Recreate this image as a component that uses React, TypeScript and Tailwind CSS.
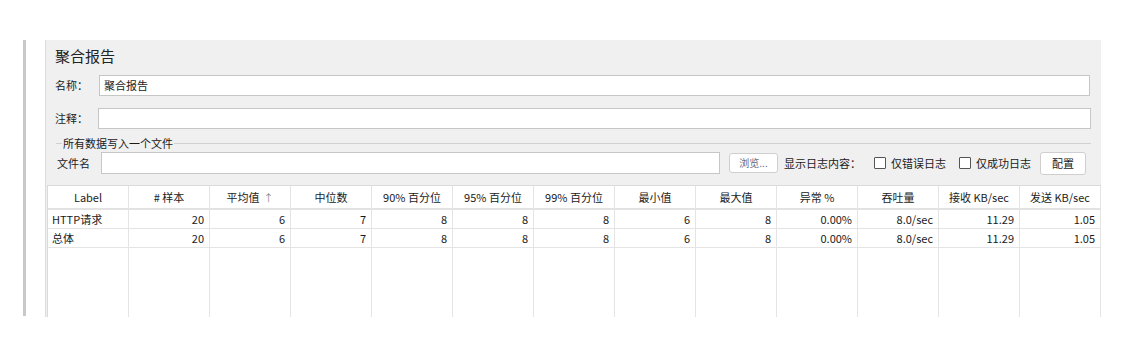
import type { FC } from 'react';

const cols = [
  { h: 'Label', r: ['HTTP请求', '总体'] },
  { h: '# 样本', r: ['20', '20'] },
  { h: '平均值', r: ['6', '6'], sort: true },
  { h: '中位数', r: ['7', '7'] },
  { h: '90% 百分位', r: ['8', '8'] },
  { h: '95% 百分位', r: ['8', '8'] },
  { h: '99% 百分位', r: ['8', '8'] },
  { h: '最小值', r: ['6', '6'] },
  { h: '最大值', r: ['8', '8'] },
  { h: '异常 %', r: ['0.00%', '0.00%'] },
  { h: '吞吐量', r: ['8.0/sec', '8.0/sec'] },
  { h: '接收 KB/sec', r: ['11.29', '11.29'] },
  { h: '发送 KB/sec', r: ['1.05', '1.05'] },
];

const Checkbox: FC = () => (
  <span className="w-[12px] h-[12px] border border-[#555] bg-white rounded-[1px] shrink-0" />
);

const App: FC = () => {
  return (
    <div className="w-[1125px] h-[340px] bg-white flex pt-[40px] pl-[23px] font-['Noto_Sans_CJK_SC',sans-serif] text-[11px] text-[#1a1a1a]">
      <div className="w-[3px] h-[276px] bg-[#c8c8cd]" />
      <div className="ml-[19px] w-[1056px] h-[277px] bg-[#f0f0f0] border-l border-[#dcdcdc] flex flex-col">
        <div className="pl-[9px] mt-[6px] h-[20px] text-[15px] leading-[20px] text-[#222]">聚合报告</div>

        <div className="mt-[9px] flex items-center h-[21px] pl-[9px]">
          <span className="w-[44px]">名称：</span>
          <div className="w-[991px] h-[21px] bg-white border border-[#c6c6c6] flex items-center pl-[4px]">聚合报告</div>
        </div>

        <div className="mt-[12px] flex items-center h-[21px] pl-[9px]">
          <span className="w-[43px]">注释：</span>
          <div className="w-[993px] h-[21px] bg-white border border-[#c6c6c6]" />
        </div>

        <div className="mt-[7px] h-[14px] flex items-center pl-[10px] pr-[10px]">
          <span className="w-[6px] h-px bg-[#d0d0d0]" />
          <span className="px-[1px] leading-[14px]">所有数据写入一个文件</span>
          <span className="flex-1 h-px bg-[#d0d0d0]" />
        </div>

        <div className="mt-[2px] h-[22px] flex items-center pl-[11px]">
          <span className="w-[44px]">文件名</span>
          <div className="w-[619px] h-[22px] bg-white border border-[#c6c6c6]" />
          <button className="ml-[9px] w-[49px] h-[20px] bg-white border border-[#cfcfcf] rounded-[3px] text-[10px] text-[#5e6b88] leading-none">浏览...</button>
          <span className="ml-[6px]">显示日志内容：</span>
          <span className="ml-[13px] flex items-center"><Checkbox /></span>
          <span className="ml-[5px]">仅错误日志</span>
          <span className="ml-[13px] flex items-center"><Checkbox /></span>
          <span className="ml-[5px]">仅成功日志</span>
          <button className="ml-[9px] w-[46px] h-[23px] bg-white border border-[#cfcfcf] rounded-[3px] text-[11px] leading-none">配置</button>
        </div>

        <div className="mt-[11px] ml-[1px] flex-1 grid grid-cols-[repeat(13,81px)] bg-white border-t border-l border-[#dadada]">
          {cols.map((c, i) => (
            <div key={i} className="flex flex-col border-r border-[#e4e4e4]">
              <div className="h-[24px] flex items-center justify-center border-b-2 border-[#e2e2e2] text-[#222]">
                {c.h}
                {c.sort && <span className="ml-[4px] text-[10px] text-[#888]">↑</span>}
              </div>
              {c.r.map((v, j) => (
                <div
                  key={j}
                  className={
                    i === 0
                      ? 'h-[19px] flex items-center pl-[4px] border-b border-[#e4e4e4]'
                      : 'h-[19px] flex items-center justify-end pr-[5px] border-b border-[#e4e4e4]'
                  }
                >
                  {v}
                </div>
              ))}
              <div className="flex-1" />
            </div>
          ))}
        </div>
      </div>
    </div>
  );
};

export default App;
